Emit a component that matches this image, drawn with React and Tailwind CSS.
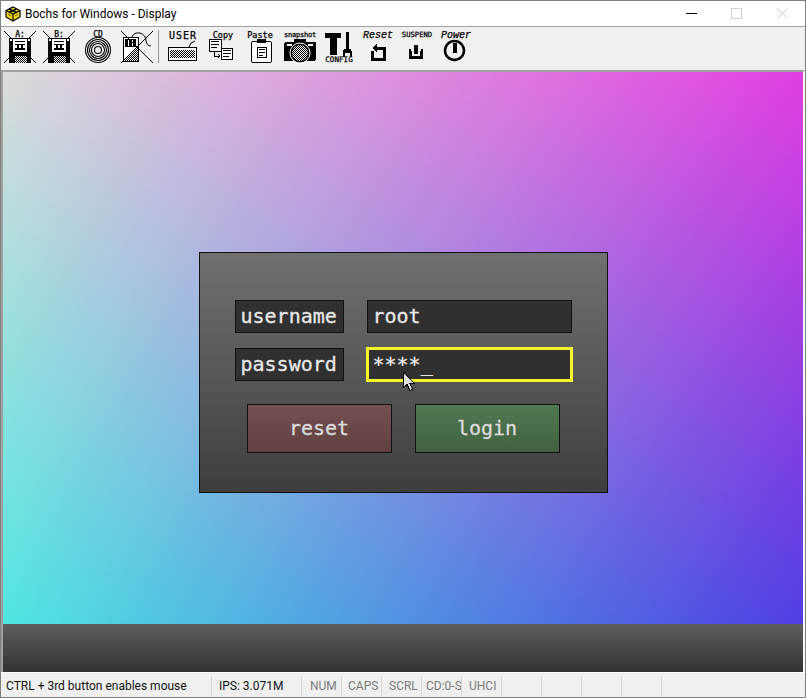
import React from 'react';

const mono = { fontFamily: '"DejaVu Sans Mono", monospace' };

// base for the 32px wide toolbar bitmaps, y 0 = screen y 30
const Icon = ({ children }) => (
    <svg width="32" height="34" viewBox="0 0 32 34" shapeRendering="crispEdges" className="shrink-0 overflow-visible">
        {children}
    </svg>
);

// small stroke keeps the tiny labels as dark as the bitmap ones
const Label = ({ x, y, size = 8, bold, italic, spacing, font = '"DejaVu Sans Mono", monospace', children }) => (
    <text
        x={x}
        y={y}
        textAnchor="middle"
        fontSize={size}
        fontWeight={bold ? 700 : 400}
        fontStyle={italic ? 'italic' : 'normal'}
        letterSpacing={spacing}
        fontFamily={font}
        fill="#000"
        stroke="#000"
        strokeWidth="0.25"
        shapeRendering="auto"
    >
        {children}
    </text>
);

const Cross = () => (
    <g stroke="#000" strokeWidth="1" shapeRendering="auto">
        <line x1="0" y1="1" x2="32" y2="33" />
        <line x1="32" y1="1" x2="0" y2="33" />
    </g>
);

const Floppy = ({ letter }) => (
    <Icon>
        <Cross />
        <Label x={16} y={7} size={8}>{letter}</Label>
        <rect x="5" y="8" width="22" height="25" fill="#000" />
        <rect x="6" y="9" width="2" height="2" fill="#fff" />
        <rect x="24" y="9" width="2" height="2" fill="#fff" />
        <rect x="9" y="9" width="14" height="13" fill="#fff" />
        <rect x="11" y="11" width="10" height="1" fill="#000" />
        <rect x="11" y="14" width="10" height="1" fill="#000" />
        <rect x="11" y="18" width="10" height="2" fill="#000" />
        <rect x="13" y="15" width="2" height="3" fill="#000" />
        <rect x="17" y="15" width="2" height="3" fill="#000" />
        <rect x="11" y="26" width="12" height="7" fill="url(#dither)" />
    </Icon>
);

const Cd = () => (
    <Icon>
        <Label x={16} y={7} size={8}>CD</Label>
        <g fill="none" stroke="#000" strokeWidth="1.1" shapeRendering="auto">
            <circle cx="16" cy="20" r="12.5" />
            <circle cx="16" cy="20" r="10.5" />
            <circle cx="16" cy="20" r="8.5" />
            <circle cx="16" cy="20" r="6.5" />
            <circle cx="16" cy="20" r="3.5" />
        </g>
    </Icon>
);

const Mouse = () => (
    <Icon>
        <rect x="2" y="7" width="15" height="24" fill="#fff" stroke="#000" />
        <path d="M17 16 L3 31 L17 31 Z" fill="url(#dither)" />
        <rect x="4" y="9" width="11" height="8" fill="#000" />
        <rect x="7" y="10" width="1" height="6" fill="#fff" />
        <rect x="11" y="10" width="1" height="6" fill="#fff" />
        <path d="M11 7 Q13 2 19 3 Q25 5 25 11 Q26 16 30 16" fill="none" stroke="#000" shapeRendering="auto" />
        <Cross />
    </Icon>
);

const Keyboard = () => (
    <Icon>
        <Label x={16} y={9} size={10} spacing={1}>USER</Label>
        <rect x="1.5" y="17.5" width="28" height="13" fill="#fff" stroke="#000" />
        <rect x="3" y="20" width="25" height="8" fill="url(#dither)" />
        <path d="M22 17 Q23 12 28 11" fill="none" stroke="#000" shapeRendering="auto" />
    </Icon>
);

const DocLines = ({ x, y, w }) => (
    <g fill="#000">
        <rect x={x} y={y} width={w} height="1" />
        <rect x={x} y={y + 3} width={w} height="1" />
        <rect x={x} y={y + 6} width={w - 2} height="1" />
    </g>
);

const Copy = () => (
    <Icon>
        <Label x={17} y={8} size={8.5}>Copy</Label>
        <rect x="3.5" y="9.5" width="12" height="12" fill="#fff" stroke="#000" />
        <DocLines x={5} y={11} w={8} />
        <rect x="15.5" y="18.5" width="11" height="11" fill="#fff" stroke="#000" />
        <DocLines x={17} y={20} w={8} />
        <path d="M8 22 V26 H14" fill="none" stroke="#000" />
        <path d="M12 24 L14 26 L12 28" fill="none" stroke="#000" />
    </Icon>
);

const Paste = () => (
    <Icon>
        <Label x={15} y={8} size={8.5}>Paste</Label>
        <rect x="6.5" y="11.5" width="20" height="21" rx="2" fill="#fff" stroke="#000" />
        <rect x="12" y="9" width="9" height="4" fill="#000" />
        <rect x="12.5" y="17.5" width="9" height="10" fill="#fff" stroke="#000" />
        <DocLines x={14} y={19} w={6} />
    </Icon>
);

const Snapshot = () => (
    <Icon>
        <Label x={16} y={7} size={7} spacing={-0.2}>snapshot</Label>
        <rect x="10" y="9" width="12" height="4" fill="#000" />
        <rect x="0" y="12" width="32" height="19" rx="2" fill="#000" />
        <rect x="3" y="14" width="5" height="2" fill="#fff" />
        <rect x="24" y="14" width="5" height="2" fill="#fff" />
        <circle cx="16" cy="23" r="10" fill="#000" stroke="#fff" shapeRendering="auto" />
        <circle cx="16" cy="23" r="8" fill="url(#dither)" shapeRendering="auto" />
    </Icon>
);

const Config = () => (
    <Icon>
        <rect x="2" y="3" width="16" height="5" fill="#000" />
        <rect x="7" y="3" width="7" height="22" fill="#000" />
        <rect x="23" y="2" width="3" height="19" fill="#000" />
        <path d="M21 19 L28 19 L29 22 L29 27 L27 27 L27 23 L22 23 L22 27 L20 27 L20 22 Z" fill="#000" />
        <Label x={16} y={32} size={7.6}>CONFIG</Label>
    </Icon>
);

const Reset = () => (
    <Icon>
        <Label x={16} y={8} size={10} italic font='"Liberation Mono", monospace'>Reset</Label>
        <path d="M13 18 H22 V29 H10 V21" fill="none" stroke="#000" strokeWidth="3" />
        <path d="M15 13 L15 23 L10 18 Z" fill="#000" />
    </Icon>
);

const Suspend = () => (
    <Icon>
        <Label x={16} y={7} size={7.2}>SUSPEND</Label>
        <rect x="13" y="15" width="4" height="9" fill="#000" />
        <path d="M10 20.5 H9.5 V27 H20.5 V20.5 H20" fill="none" stroke="#000" strokeWidth="3" />
    </Icon>
);

const Power = () => (
    <Icon>
        <Label x={16} y={8} size={10} italic font='"Liberation Mono", monospace'>Power</Label>
        <circle cx="14.5" cy="20.5" r="9.5" fill="none" stroke="#000" strokeWidth="2.5" shapeRendering="auto" />
        <rect x="13" y="13" width="4" height="10" fill="#000" />
    </Icon>
);

const BochsLogo = () => (
    <svg width="16" height="16" viewBox="0 0 16 16" className="shrink-0">
        <path d="M8 1 L15 4.5 L15 11 L8 15 L1 11 L1 4.5 Z" fill="#f0d818" stroke="#000" strokeWidth="1.2" />
        <path d="M1 4.5 L8 8 L15 4.5 M8 8 V15" fill="none" stroke="#000" strokeWidth="1.2" />
        <path d="M4 3 L11.5 6.5 M11.5 3 L4 6.5" stroke="#000" fill="none" strokeWidth="1.4" />
        <path d="M3 8 L6 10 M10 10 L13 8" stroke="#6a5a00" fill="none" />
    </svg>
);

const Field = ({ className = '', children }) => (
    <div className={`h-[33px] bg-[#303030] border border-[#111] flex items-center pl-[5px] text-[20px] text-[#e8e8e8] [-webkit-text-stroke:0.3px_#e8e8e8] ${className}`}>
        {children}
    </div>
);

const PanelButton = ({ className, children }) => (
    <div className={`w-[145px] h-[49px] border border-[#111] flex items-center justify-center text-[20px] text-[#dcdcdc] [-webkit-text-stroke:0.3px_#dcdcdc] ${className}`}>
        {children}
    </div>
);

const statusPanes = [
    { w: 'w-[90px]', text: 'IPS: 3.071M', cls: 'text-[#111] pl-[7px]' },
    { w: 'w-10', text: 'NUM', cls: 'text-[#7a7a7a] pl-2' },
    { w: 'w-10', text: 'CAPS', cls: 'text-[#7a7a7a] pl-[6px]' },
    { w: 'w-10', text: 'SCRL', cls: 'text-[#7a7a7a] pl-[7px]' },
    { w: 'w-10', text: 'CD:0-S', cls: 'text-[#7a7a7a] pl-1' },
    { w: 'w-10', text: 'UHCI', cls: 'text-[#7a7a7a] pl-[7px]' },
    { w: 'w-10', text: '' },
    { w: 'w-10', text: '' },
    { w: 'w-10', text: '' },
    { w: 'w-10', text: '' },
    { w: 'w-10', text: '' },
];

const App = () => {
    return (
        <div className="w-[806px] h-[698px] border border-[#808080] bg-[#f0f0f0] flex flex-col overflow-hidden font-['Roboto',sans-serif] text-xs">
            {/* dither fill shared by the toolbar icons */}
            <svg width="0" height="0" className="absolute">
                <defs>
                    <pattern id="dither" width="2" height="2" patternUnits="userSpaceOnUse">
                        <rect width="2" height="2" fill="#fff" />
                        <rect width="1" height="1" fill="#000" />
                        <rect x="1" y="1" width="1" height="1" fill="#000" />
                    </pattern>
                </defs>
            </svg>

            {/* Title bar */}
            <div className="h-[26px] shrink-0 bg-white border-b border-[#a0a0a0] flex items-center pl-1 relative">
                <BochsLogo />
                <span className="ml-1 text-black text-[12px]">Bochs for Windows - Display</span>
                <div className="ml-auto flex items-center">
                    <div className="w-[11px] h-px bg-black mr-[34px]" />
                    <div className="w-[11px] h-[11px] border border-[#cfcfcf] mr-[35px]" />
                    <svg width="11" height="11" viewBox="0 0 11 11" className="mr-[17px]">
                        <path d="M0.5 0.5 L10.5 10.5 M10.5 0.5 L0.5 10.5" stroke="#cfcfcf" fill="none" />
                    </svg>
                </div>
            </div>

            {/* Toolbar */}
            <div className="h-[43px] shrink-0 flex items-start gap-[7px] pl-[3px] pt-[3px]">
                <Floppy letter="A:" />
                <Floppy letter="B:" />
                <Cd />
                <Mouse />
                <div className="w-px h-[33px] bg-[#999] ml-[-2px] mr-[1px]" />
                <Keyboard />
                <Copy />
                <Paste />
                <Snapshot />
                <Config />
                <Reset />
                <Suspend />
                <Power />
            </div>

            {/* Emulator screen */}
            <div className="h-[602px] shrink-0 border-t-2 border-l-2 border-[#a0a0a0] border-r-2 border-r-[#f8f8f8]">
                <div className="relative h-[600px] flex items-center justify-center" style={mono}>
                    <div className="absolute inset-x-0 top-0 h-[552px] bg-[linear-gradient(to_right,#dcdcdc,#e23fe2)]" />
                    <div className="absolute inset-x-0 top-0 h-[552px] bg-[linear-gradient(to_right,#50e6e2,#4f3ee2)] [mask-image:linear-gradient(to_bottom,transparent,black)]" />
                    <div className="absolute inset-x-0 bottom-0 h-12 bg-[linear-gradient(to_bottom,#5e5e5e,#333333)]" />

                    {/* Login panel */}
                    <div className="relative w-[409px] h-[241px] border border-[#111] bg-[linear-gradient(to_bottom,#707070,#3e3e3e)] flex flex-col pt-[47px] pl-[35px]">
                        <div className="flex gap-[23px]">
                            <Field className="w-[109px]">username</Field>
                            <Field className="w-[205px]">root</Field>
                        </div>
                        <div className="flex gap-[23px] mt-[15px]">
                            <Field className="w-[109px]">password</Field>
                            <Field className="w-[205px] border-[#f5f52a] outline outline-[#f5f52a] shadow-[inset_0_0_0_1px_#f5f52a]">****_</Field>
                        </div>
                        <div className="flex gap-[23px] mt-[23px] ml-3">
                            <PanelButton className="bg-[linear-gradient(to_bottom,#755050,#604040)]">reset</PanelButton>
                            <PanelButton className="bg-[linear-gradient(to_bottom,#507a50,#406040)]">login</PanelButton>
                        </div>
                    </div>

                    {/* Mouse pointer */}
                    <svg width="13" height="20" viewBox="0 0 13 20" className="absolute left-[400px] top-[300px]" shapeRendering="crispEdges">
                        <path d="M0.5 0.5 V15.5 L4 12.5 L7 18.5 L9.5 17.5 L7 11.5 H11.5 Z" fill="#e0e0e0" stroke="#000" />
                    </svg>
                </div>
            </div>

            {/* Status bar */}
            <div className="flex-1 flex items-stretch pt-[3px] pb-px text-[#111] bg-[#f0f0f0] border-t border-[#fafafa]">
                <div className="w-[210px] pl-[5px] flex items-center whitespace-nowrap">CTRL + 3rd button enables mouse</div>
                {statusPanes.map((pane, i) => (
                    <div key={i} className={`${pane.w} border-l border-[#d8d8d8] flex items-center whitespace-nowrap overflow-hidden ${pane.cls || ''}`}>
                        {pane.text}
                    </div>
                ))}
            </div>
        </div>
    );
};

export default App;
